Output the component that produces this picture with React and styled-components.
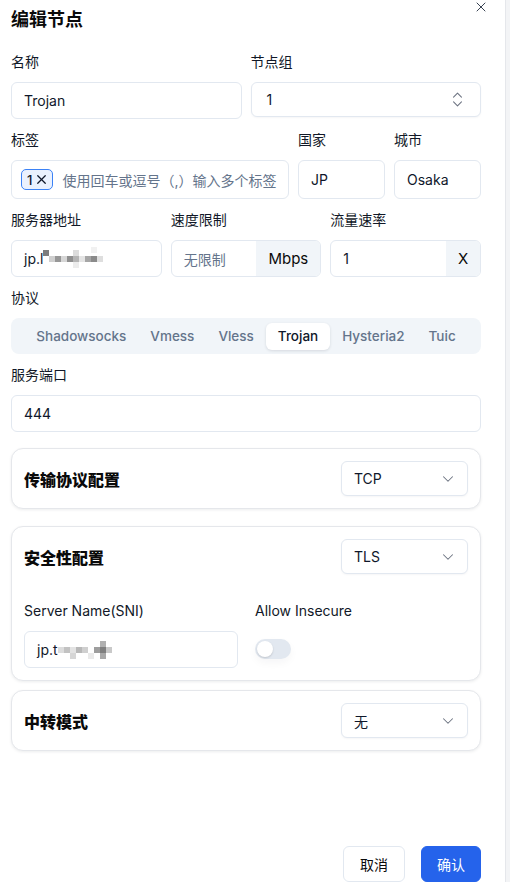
import React from "react";
import styled, { createGlobalStyle } from "styled-components";
import { X, ChevronDown, ChevronsUpDown } from "lucide-react";

const GlobalStyle = createGlobalStyle`
  html, body {
    margin: 0;
    padding: 0;
    background: #f3f4f6;
  }
  * {
    box-sizing: border-box;
  }
  body {
    font-family: Inter, "Noto Sans CJK SC", sans-serif;
    color: #0f172a;
  }
`;

const Panel = styled.div`
  position: relative;
  display: flex;
  flex-direction: column;
  width: 506px;
  height: 882px;
  padding: 8px 24px 0 11px;
  background: #fff;
  border-right: 1px solid #e5e7eb;
  overflow: hidden;
`;

const Title = styled.h2`
  margin: 0;
  font-size: 18px;
  line-height: 24px;
  font-weight: 700;
  color: #0a0a0a;
`;

const CloseBtn = styled.button`
  position: absolute;
  top: -1px;
  right: 16px;
  display: grid;
  place-items: center;
  padding: 0;
  border: none;
  background: none;
  color: #374151;
  cursor: pointer;
`;

const Form = styled.div`
  display: flex;
  flex-direction: column;
  gap: 11px;
  margin-top: 20px;
`;

const Row = styled.div`
  display: grid;
  grid-template-columns: ${(p) => p.$cols};
  column-gap: 9px;
`;

const Field = styled.div`
  display: flex;
  flex-direction: column;
  min-width: 0;
`;

const Label = styled.label`
  font-size: 14px;
  line-height: 20px;
  margin-bottom: 10px;
  color: #111827;
`;

const Input = styled.div`
  display: flex;
  align-items: center;
  height: ${(p) => p.$h || 37}px;
  padding: 0 12px;
  border: 1px solid #e2e8f0;
  border-radius: 6px;
  font-size: 14px;
  color: #0f172a;
  background: #fff;
  white-space: nowrap;
  overflow: hidden;
`;

const Placeholder = styled.span`
  color: #64748b;
  font-size: 14px;
`;

const Select = styled.div`
  display: flex;
  align-items: center;
  justify-content: space-between;
  height: 35px;
  width: ${(p) => p.$w || "auto"};
  padding: 0 ${(p) => p.$pr || 12}px 0 ${(p) => p.$pl || 12}px;
  border: 1px solid #e2e8f0;
  border-radius: 6px;
  font-size: 14px;
  background: #fff;
  box-shadow: 0 1px 2px rgba(15, 23, 42, 0.04);

  svg {
    color: #6b7280;
  }
`;

const TagInput = styled(Input)`
  gap: 9px;
  padding-left: 9px;
`;

const Chip = styled.span`
  display: inline-flex;
  align-items: center;
  gap: 2px;
  height: 21px;
  padding: 0 3px 0 5px;
  border: 1px solid #3b82f6;
  border-radius: 5px;
  background: #eaf1fe;
  font-size: 13px;
  font-weight: 500;
  color: #0f172a;
`;

const Group = styled.div`
  display: flex;
  height: 37px;
  border: 1px solid #e2e8f0;
  border-radius: 6px;
  overflow: hidden;
`;

const GroupInput = styled.div`
  flex: 1;
  display: flex;
  align-items: center;
  padding-left: 12px;
  font-size: 14px;
`;

const Addon = styled.div`
  display: flex;
  align-items: center;
  justify-content: center;
  width: ${(p) => p.$w}px;
  background: #f1f5f9;
  font-size: 15px;
  color: #0a0a0a;
`;

const Tabs = styled.div`
  display: flex;
  justify-content: center;
  align-items: center;
  height: 36px;
  padding: 4px;
  border-radius: 8px;
  background: #f1f5f9;
`;

const Tab = styled.div`
  display: flex;
  align-items: center;
  height: 27px;
  padding: 0 12px;
  border-radius: 6px;
  font-size: 13.5px;
  font-weight: 500;
  color: ${(p) => (p.$active ? "#0f172a" : "#64748b")};
  background: ${(p) => (p.$active ? "#fff" : "transparent")};
  box-shadow: ${(p) =>
    p.$active ? "0 1px 3px rgba(15, 23, 42, 0.12)" : "none"};
`;

const Cards = styled.div`
  display: flex;
  flex-direction: column;
  margin-top: 16px;
`;

const Card = styled.section`
  padding: 12px 12px;
  margin-bottom: ${(p) => p.$mb || 0}px;
  border: 1px solid #e5e7eb;
  border-radius: 12px;
  background: #fff;
  box-shadow: 0 1px 3px rgba(15, 23, 42, 0.08);
`;

const CardHead = styled.div`
  display: flex;
  align-items: center;
  justify-content: space-between;

  h3 {
    margin: 0;
    font-size: 16px;
    font-weight: 800;
    color: #0a0a0a;
  }
`;

const CardBody = styled.div`
  display: grid;
  grid-template-columns: 214px 1fr;
  column-gap: 17px;
  margin-top: 27px;
`;

const Toggle = styled.div`
  position: relative;
  width: 36px;
  height: 20px;
  margin-top: 8px;
  border-radius: 10px;
  background: #e2e8f0;
  box-shadow: 0 4px 8px rgba(15, 23, 42, 0.04);

  &::after {
    content: "";
    position: absolute;
    top: 2px;
    left: 2px;
    width: 16px;
    height: 16px;
    border-radius: 50%;
    background: #fff;
    box-shadow: 0 1px 2px rgba(0, 0, 0, 0.15);
  }
`;

const Footer = styled.div`
  display: flex;
  justify-content: flex-end;
  gap: 16px;
  margin-top: auto;
`;

const Button = styled.button`
  height: 36px;
  width: ${(p) => p.$w}px;
  border-radius: 6px;
  font-family: inherit;
  font-size: 14px;
  cursor: pointer;
  border: 1px solid ${(p) => (p.$primary ? "#2563eb" : "#e2e8f0")};
  background: ${(p) => (p.$primary ? "#2563eb" : "#fff")};
  color: ${(p) => (p.$primary ? "#fff" : "#0a0a0a")};
`;

const Blur = ({ cells }) => (
  <svg width="66" height="24" viewBox="0 0 66 24">
    {cells.map(([x, y, c], i) => (
      <rect key={i} x={x} y={y} width="6" height="6" fill={c} />
    ))}
  </svg>
);

const addrCells = [
  [0, 3, "#7d7d7d"],
  [6, 9, "#cfcfcf"],
  [12, 9, "#979797"],
  [18, 9, "#d6d6d6"],
  [24, 9, "#8f8f8f"],
  [30, 3, "#dcdcdc"],
  [30, 9, "#b4b4b4"],
  [30, 15, "#ececec"],
  [36, 9, "#e4e4e4"],
  [42, 9, "#a6a6a6"],
  [48, 9, "#8a8a8a"],
  [48, 0, "#f1f1f1"],
  [54, 9, "#dedede"],
];

const sniCells = [
  [0, 9, "#dcdcdc"],
  [6, 9, "#c2c2c2"],
  [12, 9, "#e3e3e3"],
  [12, 15, "#d6d6d6"],
  [18, 9, "#b8b8b8"],
  [24, 9, "#cfcfcf"],
  [30, 15, "#eaeaea"],
  [36, 9, "#9e9e9e"],
  [42, 3, "#b0b0b0"],
  [42, 9, "#7f7f7f"],
  [42, 15, "#a8a8a8"],
  [48, 9, "#c9c9c9"],
];

const protocols = ["Shadowsocks", "Vmess", "Vless", "Trojan", "Hysteria2", "Tuic"];

export default function App() {
  return (
    <>
      <GlobalStyle />
      <Panel>
        <CloseBtn>
          <X size={16} strokeWidth={1.5} />
        </CloseBtn>
        <Title>编辑节点</Title>

        <Form>
          <Row $cols="1fr 1fr">
            <Field>
              <Label>名称</Label>
              <Input>Trojan</Input>
            </Field>
            <Field>
              <Label>节点组</Label>
              <Select $pl={15} $pr={13}>
                <span>1</span>
                <ChevronsUpDown size={19} strokeWidth={1.3} />
              </Select>
            </Field>
          </Row>

          <Row $cols="278px 1fr 1fr">
            <Field>
              <Label>标签</Label>
              <TagInput $h={39}>
                <Chip>
                  1 <X size={15} strokeWidth={2} />
                </Chip>
                <Placeholder>使用回车或逗号（,）输入多个标签</Placeholder>
              </TagInput>
            </Field>
            <Field>
              <Label>国家</Label>
              <Input $h={39}>JP</Input>
            </Field>
            <Field>
              <Label>城市</Label>
              <Input $h={39}>Osaka</Input>
            </Field>
          </Row>

          <Row $cols="1fr 1fr 1fr">
            <Field>
              <Label>服务器地址</Label>
              <Input>
                jp.l
                <Blur cells={addrCells} />
              </Input>
            </Field>
            <Field>
              <Label>速度限制</Label>
              <Group>
                <GroupInput>
                  <Placeholder>无限制</Placeholder>
                </GroupInput>
                <Addon $w={64}>Mbps</Addon>
              </Group>
            </Field>
            <Field>
              <Label>流量速率</Label>
              <Group>
                <GroupInput>1</GroupInput>
                <Addon $w={34}>X</Addon>
              </Group>
            </Field>
          </Row>

          <Field>
            <Label>协议</Label>
            <Tabs>
              {protocols.map((p) => (
                <Tab key={p} $active={p === "Trojan"}>
                  {p}
                </Tab>
              ))}
            </Tabs>
          </Field>

          <Field>
            <Label>服务端口</Label>
            <Input>444</Input>
          </Field>
        </Form>

        <Cards>
          <Card $mb={17}>
            <CardHead>
              <h3>传输协议配置</h3>
              <Select $w="127px" $pr={10}>
                <span>TCP</span>
                <ChevronDown size={18} strokeWidth={1.4} />
              </Select>
            </CardHead>
          </Card>

          <Card $mb={9}>
            <CardHead>
              <h3>安全性配置</h3>
              <Select $w="127px" $pr={10}>
                <span>TLS</span>
                <ChevronDown size={18} strokeWidth={1.4} />
              </Select>
            </CardHead>
            <CardBody>
              <Field>
                <Label>Server Name(SNI)</Label>
                <Input>
                  jp.t
                  <Blur cells={sniCells} />
                </Input>
              </Field>
              <Field>
                <Label>Allow Insecure</Label>
                <Toggle />
              </Field>
            </CardBody>
          </Card>

          <Card>
            <CardHead>
              <h3>中转模式</h3>
              <Select $w="127px" $pr={10}>
                <span>无</span>
                <ChevronDown size={18} strokeWidth={1.4} />
              </Select>
            </CardHead>
          </Card>
        </Cards>

        <Footer>
          <Button $w={62}>取消</Button>
          <Button $w={60} $primary>
            确认
          </Button>
        </Footer>
      </Panel>
    </>
  );
}
